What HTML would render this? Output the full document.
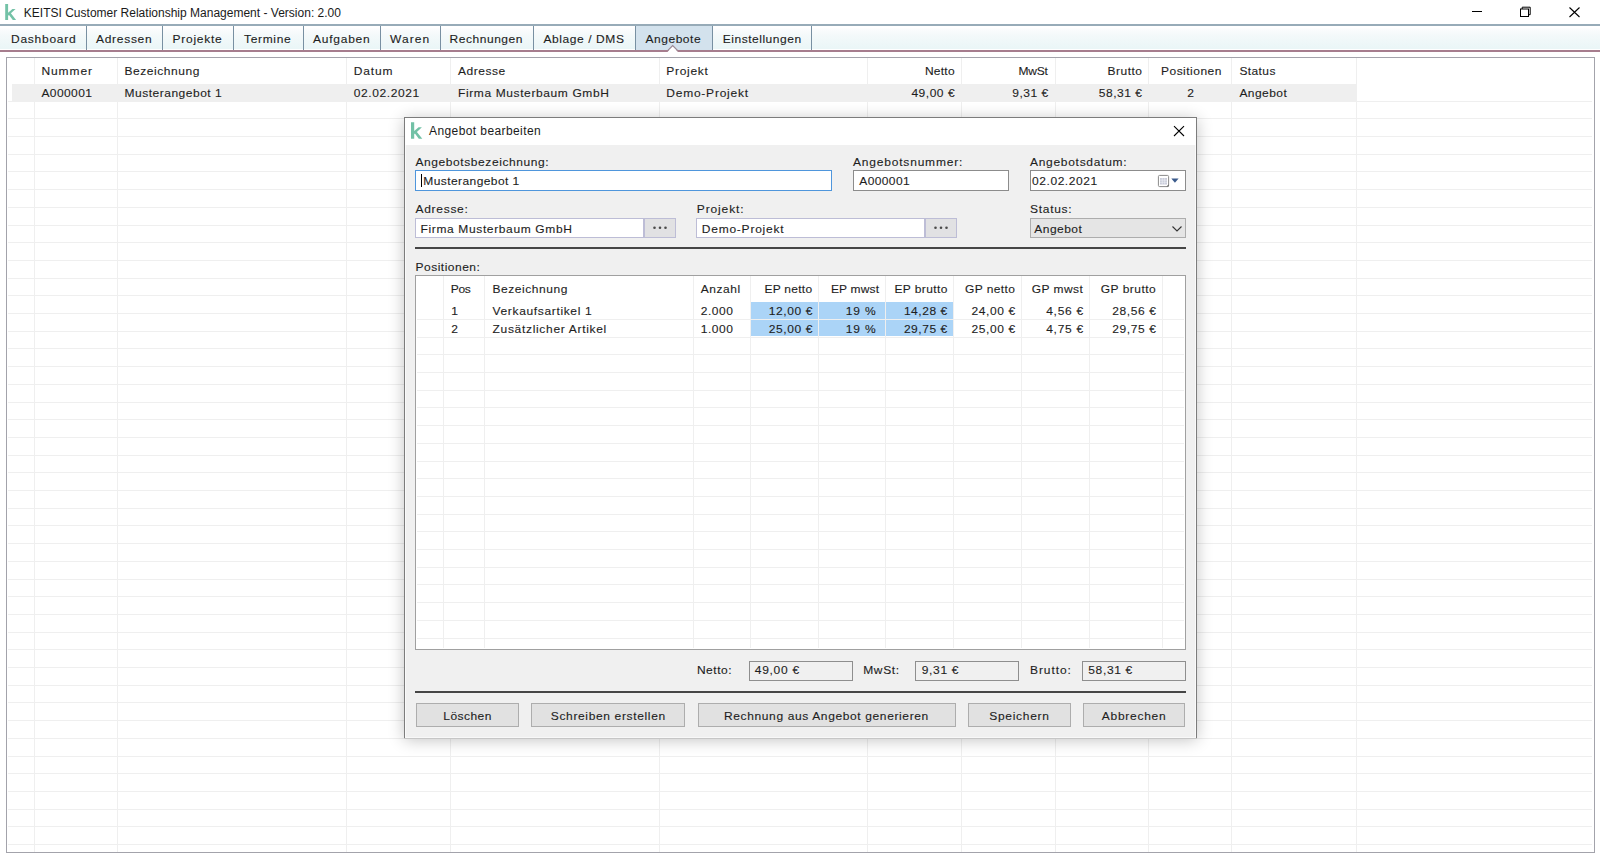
<!DOCTYPE html><html><head><meta charset="utf-8"><style>
html,body{margin:0;padding:0;width:1600px;height:858px;overflow:hidden;background:#fff;}
body{position:relative;font-family:"Liberation Sans",sans-serif;}
.t{position:absolute;white-space:nowrap;line-height:20px;height:20px;-webkit-text-stroke:0.12px currentColor;}
.r{position:absolute;box-sizing:border-box;}
svg{position:absolute;}
</style></head><body>
<svg style="left:0;top:0" width="30" height="24"><path d="M5.2 4.1H8.1V12.7L12.4 8.9H15.6L10.9 13.3L16.1 19.9H12.8L9.0 15.0L8.1 15.8V19.9H5.2Z" fill="#74c2a7"/></svg>
<div class="t" style="left:23.80px;top:2.64px;font-size:12px;color:#1a1a1a;letter-spacing:0.006px;-webkit-text-stroke:0;">KEITSI Customer Relationship Management - Version: 2.00</div>
<div class="r" style="left:1472px;top:11px;width:10px;height:1px;background:#000"></div>
<svg style="left:1515px;top:3px" width="20" height="18"><rect x="5.5" y="6" width="8" height="7.5" fill="none" stroke="#000" stroke-width="1"/><path d="M7.2 6v-1.8h8v7.5h-1.7" fill="none" stroke="#000" stroke-width="1"/></svg>
<svg style="left:1565px;top:3px" width="20" height="18"><path d="M4.5 4.5l10 9.5M14.5 4.5l-10 9.5" stroke="#000" stroke-width="1.1"/></svg>
<div class="r" style="left:0px;top:24px;width:1600px;height:2px;background:#97abb8"></div>
<div class="r" style="left:0px;top:26px;width:1600px;height:24px;background:linear-gradient(#fff 0px,#fff 1.5px,#fbfcfd 3px,#f3f9fa 10px,#eaf6f7 22.5px,#fff 23.5px)"></div>
<div class="r" style="left:635.1px;top:26px;width:77.0px;height:24px;background:#d3e2ed"></div>
<div class="r" style="left:86px;top:26px;width:1px;height:24px;background:#7890a2"></div>
<div class="r" style="left:162px;top:26px;width:1px;height:24px;background:#7890a2"></div>
<div class="r" style="left:233px;top:26px;width:1px;height:24px;background:#7890a2"></div>
<div class="r" style="left:303px;top:26px;width:1px;height:24px;background:#7890a2"></div>
<div class="r" style="left:380px;top:26px;width:1px;height:24px;background:#7890a2"></div>
<div class="r" style="left:440px;top:26px;width:1px;height:24px;background:#7890a2"></div>
<div class="r" style="left:533px;top:26px;width:1px;height:24px;background:#7890a2"></div>
<div class="r" style="left:635px;top:26px;width:1px;height:24px;background:#7890a2"></div>
<div class="r" style="left:712px;top:26px;width:1px;height:24px;background:#7890a2"></div>
<div class="r" style="left:811px;top:26px;width:1px;height:24px;background:#7890a2"></div>
<div class="r" style="left:635px;top:26px;width:1px;height:24px;background:#7890a2"></div>
<div class="t" style="left:11.00px;top:28.84px;font-size:12px;color:#1e1e1e;letter-spacing:0.746px;transform:scaleY(0.91);transform-origin:0 14.16px;">Dashboard</div>
<div class="t" style="left:96.00px;top:28.84px;font-size:12px;color:#1e1e1e;letter-spacing:0.711px;transform:scaleY(0.91);transform-origin:0 14.16px;">Adressen</div>
<div class="t" style="left:172.50px;top:28.84px;font-size:12px;color:#1e1e1e;letter-spacing:0.736px;transform:scaleY(0.91);transform-origin:0 14.16px;">Projekte</div>
<div class="t" style="left:244.00px;top:28.84px;font-size:12px;color:#1e1e1e;letter-spacing:0.666px;transform:scaleY(0.91);transform-origin:0 14.16px;">Termine</div>
<div class="t" style="left:313.00px;top:28.84px;font-size:12px;color:#1e1e1e;letter-spacing:0.756px;transform:scaleY(0.91);transform-origin:0 14.16px;">Aufgaben</div>
<div class="t" style="left:390.00px;top:28.84px;font-size:12px;color:#1e1e1e;letter-spacing:1.044px;transform:scaleY(0.91);transform-origin:0 14.16px;">Waren</div>
<div class="t" style="left:449.60px;top:28.84px;font-size:12px;color:#1e1e1e;letter-spacing:0.535px;transform:scaleY(0.91);transform-origin:0 14.16px;">Rechnungen</div>
<div class="t" style="left:543.40px;top:28.84px;font-size:12px;color:#1e1e1e;letter-spacing:0.588px;transform:scaleY(0.91);transform-origin:0 14.16px;">Ablage / DMS</div>
<div class="t" style="left:645.40px;top:28.84px;font-size:12px;color:#1e1e1e;letter-spacing:0.556px;transform:scaleY(0.91);transform-origin:0 14.16px;">Angebote</div>
<div class="t" style="left:722.80px;top:28.84px;font-size:12px;color:#1e1e1e;letter-spacing:0.518px;transform:scaleY(0.91);transform-origin:0 14.16px;">Einstellungen</div>
<div class="r" style="left:0px;top:49.5px;width:1600px;height:2px;background:#a67d8e"></div>
<svg style="left:660px;top:40px" width="30" height="14"><path d="M7.5 12 L12.7 6.2 L17.9 12z" fill="#fff"/><path d="M7.6 10.6 L12.7 5.6 L17.8 10.6" fill="none" stroke="#9b8893" stroke-width="1.1"/></svg>
<div class="r" style="left:6px;top:57px;width:1589px;height:796px;border:1px solid #a3a3ab;background:#fff"></div>
<div class="r" style="left:34px;top:58px;width:1px;height:794px;background:#efefef"></div>
<div class="r" style="left:117px;top:58px;width:1px;height:794px;background:#efefef"></div>
<div class="r" style="left:346px;top:58px;width:1px;height:794px;background:#efefef"></div>
<div class="r" style="left:450px;top:58px;width:1px;height:794px;background:#efefef"></div>
<div class="r" style="left:659px;top:58px;width:1px;height:794px;background:#efefef"></div>
<div class="r" style="left:867px;top:58px;width:1px;height:794px;background:#efefef"></div>
<div class="r" style="left:961px;top:58px;width:1px;height:794px;background:#efefef"></div>
<div class="r" style="left:1055px;top:58px;width:1px;height:794px;background:#efefef"></div>
<div class="r" style="left:1148px;top:58px;width:1px;height:794px;background:#efefef"></div>
<div class="r" style="left:1231px;top:58px;width:1px;height:794px;background:#efefef"></div>
<div class="r" style="left:1356px;top:58px;width:1px;height:794px;background:#efefef"></div>
<div class="r" style="left:8px;top:101px;width:1584px;height:1px;background:#efefef"></div>
<div class="r" style="left:8px;top:118px;width:1584px;height:1px;background:#efefef"></div>
<div class="r" style="left:8px;top:136px;width:1584px;height:1px;background:#efefef"></div>
<div class="r" style="left:8px;top:154px;width:1584px;height:1px;background:#efefef"></div>
<div class="r" style="left:8px;top:171px;width:1584px;height:1px;background:#efefef"></div>
<div class="r" style="left:8px;top:189px;width:1584px;height:1px;background:#efefef"></div>
<div class="r" style="left:8px;top:207px;width:1584px;height:1px;background:#efefef"></div>
<div class="r" style="left:8px;top:225px;width:1584px;height:1px;background:#efefef"></div>
<div class="r" style="left:8px;top:242px;width:1584px;height:1px;background:#efefef"></div>
<div class="r" style="left:8px;top:260px;width:1584px;height:1px;background:#efefef"></div>
<div class="r" style="left:8px;top:278px;width:1584px;height:1px;background:#efefef"></div>
<div class="r" style="left:8px;top:295px;width:1584px;height:1px;background:#efefef"></div>
<div class="r" style="left:8px;top:313px;width:1584px;height:1px;background:#efefef"></div>
<div class="r" style="left:8px;top:331px;width:1584px;height:1px;background:#efefef"></div>
<div class="r" style="left:8px;top:348px;width:1584px;height:1px;background:#efefef"></div>
<div class="r" style="left:8px;top:366px;width:1584px;height:1px;background:#efefef"></div>
<div class="r" style="left:8px;top:384px;width:1584px;height:1px;background:#efefef"></div>
<div class="r" style="left:8px;top:402px;width:1584px;height:1px;background:#efefef"></div>
<div class="r" style="left:8px;top:419px;width:1584px;height:1px;background:#efefef"></div>
<div class="r" style="left:8px;top:437px;width:1584px;height:1px;background:#efefef"></div>
<div class="r" style="left:8px;top:455px;width:1584px;height:1px;background:#efefef"></div>
<div class="r" style="left:8px;top:472px;width:1584px;height:1px;background:#efefef"></div>
<div class="r" style="left:8px;top:490px;width:1584px;height:1px;background:#efefef"></div>
<div class="r" style="left:8px;top:508px;width:1584px;height:1px;background:#efefef"></div>
<div class="r" style="left:8px;top:525px;width:1584px;height:1px;background:#efefef"></div>
<div class="r" style="left:8px;top:543px;width:1584px;height:1px;background:#efefef"></div>
<div class="r" style="left:8px;top:561px;width:1584px;height:1px;background:#efefef"></div>
<div class="r" style="left:8px;top:579px;width:1584px;height:1px;background:#efefef"></div>
<div class="r" style="left:8px;top:596px;width:1584px;height:1px;background:#efefef"></div>
<div class="r" style="left:8px;top:614px;width:1584px;height:1px;background:#efefef"></div>
<div class="r" style="left:8px;top:632px;width:1584px;height:1px;background:#efefef"></div>
<div class="r" style="left:8px;top:649px;width:1584px;height:1px;background:#efefef"></div>
<div class="r" style="left:8px;top:667px;width:1584px;height:1px;background:#efefef"></div>
<div class="r" style="left:8px;top:685px;width:1584px;height:1px;background:#efefef"></div>
<div class="r" style="left:8px;top:702px;width:1584px;height:1px;background:#efefef"></div>
<div class="r" style="left:8px;top:720px;width:1584px;height:1px;background:#efefef"></div>
<div class="r" style="left:8px;top:738px;width:1584px;height:1px;background:#efefef"></div>
<div class="r" style="left:8px;top:756px;width:1584px;height:1px;background:#efefef"></div>
<div class="r" style="left:8px;top:773px;width:1584px;height:1px;background:#efefef"></div>
<div class="r" style="left:8px;top:791px;width:1584px;height:1px;background:#efefef"></div>
<div class="r" style="left:8px;top:809px;width:1584px;height:1px;background:#efefef"></div>
<div class="r" style="left:8px;top:826px;width:1584px;height:1px;background:#efefef"></div>
<div class="r" style="left:8px;top:844px;width:1584px;height:1px;background:#efefef"></div>
<div class="r" style="left:12px;top:84px;width:1345px;height:17px;background:#efefef"></div>
<div class="t" style="left:41.40px;top:61.14px;font-size:12px;color:#1e1e1e;letter-spacing:0.919px;transform:scaleY(0.91);transform-origin:0 14.16px;">Nummer</div>
<div class="t" style="left:124.50px;top:61.14px;font-size:12px;color:#1e1e1e;letter-spacing:0.554px;transform:scaleY(0.91);transform-origin:0 14.16px;">Bezeichnung</div>
<div class="t" style="left:353.75px;top:61.14px;font-size:12px;color:#1e1e1e;letter-spacing:0.851px;transform:scaleY(0.91);transform-origin:0 14.16px;">Datum</div>
<div class="t" style="left:458.00px;top:61.14px;font-size:12px;color:#1e1e1e;letter-spacing:0.525px;transform:scaleY(0.91);transform-origin:0 14.16px;">Adresse</div>
<div class="t" style="left:666.30px;top:61.14px;font-size:12px;color:#1e1e1e;letter-spacing:0.698px;transform:scaleY(0.91);transform-origin:0 14.16px;">Projekt</div>
<div class="t" style="left:924.90px;top:61.14px;font-size:12px;color:#1e1e1e;letter-spacing:0.248px;transform:scaleY(0.91);transform-origin:0 14.16px;">Netto</div>
<div class="t" style="left:1018.60px;top:61.14px;font-size:12px;color:#1e1e1e;letter-spacing:-0.222px;transform:scaleY(0.91);transform-origin:0 14.16px;">MwSt</div>
<div class="t" style="left:1107.50px;top:61.14px;font-size:12px;color:#1e1e1e;letter-spacing:0.492px;transform:scaleY(0.91);transform-origin:0 14.16px;">Brutto</div>
<div class="t" style="left:1161.00px;top:61.14px;font-size:12px;color:#1e1e1e;letter-spacing:0.482px;transform:scaleY(0.91);transform-origin:0 14.16px;">Positionen</div>
<div class="t" style="left:1239.40px;top:61.14px;font-size:12px;color:#1e1e1e;letter-spacing:0.396px;transform:scaleY(0.91);transform-origin:0 14.16px;">Status</div>
<div class="t" style="left:41.40px;top:83.04px;font-size:12px;color:#1e1e1e;letter-spacing:0.421px;transform:scaleY(0.91);transform-origin:0 14.16px;">A000001</div>
<div class="t" style="left:124.50px;top:83.04px;font-size:12px;color:#1e1e1e;letter-spacing:0.508px;transform:scaleY(0.91);transform-origin:0 14.16px;">Musterangebot 1</div>
<div class="t" style="left:353.75px;top:83.04px;font-size:12px;color:#1e1e1e;letter-spacing:0.596px;transform:scaleY(0.91);transform-origin:0 14.16px;">02.02.2021</div>
<div class="t" style="left:458.00px;top:83.04px;font-size:12px;color:#1e1e1e;letter-spacing:0.611px;transform:scaleY(0.91);transform-origin:0 14.16px;">Firma Musterbaum GmbH</div>
<div class="t" style="left:666.30px;top:83.04px;font-size:12px;color:#1e1e1e;letter-spacing:0.762px;transform:scaleY(0.91);transform-origin:0 14.16px;">Demo-Projekt</div>
<div class="t" style="left:911.40px;top:83.04px;font-size:12px;color:#1e1e1e;letter-spacing:0.523px;transform:scaleY(0.91);transform-origin:0 14.16px;">49,00 €</div>
<div class="t" style="left:1012.20px;top:83.04px;font-size:12px;color:#1e1e1e;letter-spacing:0.542px;transform:scaleY(0.91);transform-origin:0 14.16px;">9,31 €</div>
<div class="t" style="left:1098.80px;top:83.04px;font-size:12px;color:#1e1e1e;letter-spacing:0.523px;transform:scaleY(0.91);transform-origin:0 14.16px;">58,31 €</div>
<div class="t" style="left:1187.30px;top:83.04px;font-size:12px;color:#1e1e1e;letter-spacing:0.000px;transform:scaleY(0.91);transform-origin:0 14.16px;">2</div>
<div class="t" style="left:1239.40px;top:83.04px;font-size:12px;color:#1e1e1e;letter-spacing:0.438px;transform:scaleY(0.91);transform-origin:0 14.16px;">Angebot</div>
<div class="r" style="left:404px;top:117px;width:793px;height:621px;box-shadow:0 1px 0 #c6c6c6, 0 2px 15px rgba(0,0,0,0.24);background:#f0f0f0;border:1px solid #7c7c7c;border-bottom:none"></div>
<div class="r" style="left:405px;top:118px;width:791px;height:26.5px;background:#fff"></div>
<div class="r" style="left:405px;top:144.5px;width:1px;height:593.5px;background:#fafafa"></div>
<div class="r" style="left:1195px;top:144.5px;width:1px;height:593.5px;background:#fafafa"></div>
<div class="r" style="left:405px;top:737px;width:791px;height:1px;background:#f8f8f8"></div>
<svg style="left:405px;top:118px" width="24" height="24"><path d="M6.0 4.2H9.2V13.1L13.6 9.2H16.9L11.9 13.9L17.3 20.7H13.8L9.9 15.6L9.2 16.2V20.7H6.0Z" fill="#72c1a6"/></svg>
<div class="t" style="left:429.00px;top:121.14px;font-size:12px;color:#1a1a1a;letter-spacing:0.407px;-webkit-text-stroke:0;">Angebot bearbeiten</div>
<svg style="left:1170px;top:122px" width="18" height="18"><path d="M4 4.2l10 9.8M14 4.2l-10 9.8" stroke="#000" stroke-width="1.1"/></svg>
<div class="t" style="left:415.50px;top:152.04px;font-size:12px;color:#1e1e1e;letter-spacing:0.578px;transform:scaleY(0.91);transform-origin:0 14.16px;">Angebotsbezeichnung:</div>
<div class="t" style="left:853.00px;top:152.04px;font-size:12px;color:#1e1e1e;letter-spacing:0.806px;transform:scaleY(0.91);transform-origin:0 14.16px;">Angebotsnummer:</div>
<div class="t" style="left:1030.00px;top:152.04px;font-size:12px;color:#1e1e1e;letter-spacing:0.707px;transform:scaleY(0.91);transform-origin:0 14.16px;">Angebotsdatum:</div>
<div class="r" style="left:415px;top:170.3px;width:416.5px;height:20.8px;border:1px solid #4f96dc;background:#fff"></div>
<div class="r" style="left:852.5px;top:170.3px;width:156.5px;height:20.8px;border:1px solid #8c8c8c;background:#fff"></div>
<div class="r" style="left:1029.5px;top:170.3px;width:156.5px;height:20.8px;border:1px solid #8c8c8c;background:#fff"></div>
<div class="t" style="left:423.30px;top:171.14px;font-size:12px;color:#1e1e1e;letter-spacing:0.415px;transform:scaleY(0.91);transform-origin:0 14.16px;">Musterangebot 1</div>
<div class="r" style="left:421px;top:174px;width:1.2px;height:13px;background:#000"></div>
<div class="t" style="left:859.25px;top:171.14px;font-size:12px;color:#1e1e1e;letter-spacing:0.396px;transform:scaleY(0.91);transform-origin:0 14.16px;">A000001</div>
<div class="t" style="left:1032.00px;top:171.14px;font-size:12px;color:#1e1e1e;letter-spacing:0.568px;transform:scaleY(0.91);transform-origin:0 14.16px;">02.02.2021</div>
<svg style="left:1155px;top:173px" width="28" height="17"><rect x="3.4" y="2.4" width="10.2" height="11.2" rx="1.2" fill="#fff" stroke="#8a8a8a" stroke-width="1"/><rect x="5" y="5" width="7" height="6.5" fill="#c9ccda"/><path d="M5 7.2h7M5 9.3h7M7.3 5v6.5M9.7 5v6.5" stroke="#eef0f6" stroke-width="0.6"/><path d="M11.5 13.6l2.1-2.1v2.1z" fill="#555"/><path d="M16.3 5.6h7.3l-3.65 4.2z" fill="#3b5b8c"/></svg>
<div class="t" style="left:415.50px;top:198.94px;font-size:12px;color:#1e1e1e;letter-spacing:0.711px;transform:scaleY(0.91);transform-origin:0 14.16px;">Adresse:</div>
<div class="t" style="left:696.75px;top:198.94px;font-size:12px;color:#1e1e1e;letter-spacing:0.879px;transform:scaleY(0.91);transform-origin:0 14.16px;">Projekt:</div>
<div class="t" style="left:1030.00px;top:198.94px;font-size:12px;color:#1e1e1e;letter-spacing:0.705px;transform:scaleY(0.91);transform-origin:0 14.16px;">Status:</div>
<div class="r" style="left:415px;top:217.6px;width:229px;height:20.2px;border:1px solid #bdbdd6;background:#fff"></div>
<div class="r" style="left:643.5px;top:217.6px;width:32px;height:20.2px;border:1px solid #bdbdd6;background:#e1e1e3"></div>
<div class="r" style="left:696px;top:217.6px;width:229px;height:20.2px;border:1px solid #bdbdd6;background:#fff"></div>
<div class="r" style="left:924.5px;top:217.6px;width:32.5px;height:20.2px;border:1px solid #bdbdd6;background:#e1e1e3"></div>
<div class="r" style="left:1029.5px;top:217.6px;width:156.5px;height:20.2px;border:1px solid #adadad;background:#e5e5e5"></div>
<div class="t" style="left:420.50px;top:218.84px;font-size:12px;color:#1e1e1e;letter-spacing:0.636px;transform:scaleY(0.91);transform-origin:0 14.16px;">Firma Musterbaum GmbH</div>
<div class="t" style="left:701.75px;top:218.84px;font-size:12px;color:#1e1e1e;letter-spacing:0.771px;transform:scaleY(0.91);transform-origin:0 14.16px;">Demo-Projekt</div>
<div class="t" style="left:1034.25px;top:218.84px;font-size:12px;color:#1e1e1e;letter-spacing:0.479px;transform:scaleY(0.91);transform-origin:0 14.16px;">Angebot</div>
<svg style="left:651.5px;top:222px" width="16" height="10"><circle cx="2.5" cy="5.7" r="1.3" fill="#4a4a4a"/><circle cx="8" cy="5.7" r="1.3" fill="#4a4a4a"/><circle cx="13.5" cy="5.7" r="1.3" fill="#4a4a4a"/></svg>
<svg style="left:932.5px;top:222px" width="16" height="10"><circle cx="2.5" cy="5.7" r="1.3" fill="#4a4a4a"/><circle cx="8" cy="5.7" r="1.3" fill="#4a4a4a"/><circle cx="13.5" cy="5.7" r="1.3" fill="#4a4a4a"/></svg>
<svg style="left:1168px;top:222px" width="16" height="12"><path d="M4.5 4.5l4.5 4.5 4.5-4.5" fill="none" stroke="#333" stroke-width="1.1"/></svg>
<div class="r" style="left:415px;top:247.3px;width:771px;height:2.2px;background:#464646"></div>
<div class="t" style="left:415.50px;top:257.09px;font-size:12px;color:#1e1e1e;letter-spacing:0.496px;transform:scaleY(0.91);transform-origin:0 14.16px;">Positionen:</div>
<div class="r" style="left:415px;top:275px;width:771px;height:374.5px;border:1px solid #a0a0a0;background:#fff"></div>
<div class="r" style="left:443px;top:276px;width:1px;height:372px;background:#efefef"></div>
<div class="r" style="left:484px;top:276px;width:1px;height:372px;background:#efefef"></div>
<div class="r" style="left:693px;top:276px;width:1px;height:372px;background:#efefef"></div>
<div class="r" style="left:750px;top:276px;width:1px;height:372px;background:#efefef"></div>
<div class="r" style="left:818px;top:276px;width:1px;height:372px;background:#efefef"></div>
<div class="r" style="left:885px;top:276px;width:1px;height:372px;background:#efefef"></div>
<div class="r" style="left:953px;top:276px;width:1px;height:372px;background:#efefef"></div>
<div class="r" style="left:1021px;top:276px;width:1px;height:372px;background:#efefef"></div>
<div class="r" style="left:1089px;top:276px;width:1px;height:372px;background:#efefef"></div>
<div class="r" style="left:1162px;top:276px;width:1px;height:372px;background:#efefef"></div>
<div class="r" style="left:417px;top:319px;width:767px;height:1px;background:#efefef"></div>
<div class="r" style="left:417px;top:337px;width:767px;height:1px;background:#efefef"></div>
<div class="r" style="left:417px;top:354px;width:767px;height:1px;background:#efefef"></div>
<div class="r" style="left:417px;top:372px;width:767px;height:1px;background:#efefef"></div>
<div class="r" style="left:417px;top:390px;width:767px;height:1px;background:#efefef"></div>
<div class="r" style="left:417px;top:407px;width:767px;height:1px;background:#efefef"></div>
<div class="r" style="left:417px;top:425px;width:767px;height:1px;background:#efefef"></div>
<div class="r" style="left:417px;top:443px;width:767px;height:1px;background:#efefef"></div>
<div class="r" style="left:417px;top:461px;width:767px;height:1px;background:#efefef"></div>
<div class="r" style="left:417px;top:478px;width:767px;height:1px;background:#efefef"></div>
<div class="r" style="left:417px;top:496px;width:767px;height:1px;background:#efefef"></div>
<div class="r" style="left:417px;top:514px;width:767px;height:1px;background:#efefef"></div>
<div class="r" style="left:417px;top:531px;width:767px;height:1px;background:#efefef"></div>
<div class="r" style="left:417px;top:549px;width:767px;height:1px;background:#efefef"></div>
<div class="r" style="left:417px;top:567px;width:767px;height:1px;background:#efefef"></div>
<div class="r" style="left:417px;top:584px;width:767px;height:1px;background:#efefef"></div>
<div class="r" style="left:417px;top:602px;width:767px;height:1px;background:#efefef"></div>
<div class="r" style="left:417px;top:620px;width:767px;height:1px;background:#efefef"></div>
<div class="r" style="left:417px;top:638px;width:767px;height:1px;background:#efefef"></div>
<div class="r" style="left:751px;top:302px;width:67px;height:17px;background:#abd4f7"></div>
<div class="r" style="left:751px;top:320px;width:67px;height:16px;background:#abd4f7"></div>
<div class="r" style="left:819px;top:302px;width:66px;height:17px;background:#abd4f7"></div>
<div class="r" style="left:819px;top:320px;width:66px;height:16px;background:#abd4f7"></div>
<div class="r" style="left:886px;top:302px;width:67px;height:17px;background:#abd4f7"></div>
<div class="r" style="left:886px;top:320px;width:67px;height:16px;background:#abd4f7"></div>
<div class="t" style="left:450.75px;top:279.34px;font-size:12px;color:#1e1e1e;letter-spacing:-0.339px;transform:scaleY(0.91);transform-origin:0 14.16px;">Pos</div>
<div class="t" style="left:492.50px;top:279.34px;font-size:12px;color:#1e1e1e;letter-spacing:0.554px;transform:scaleY(0.91);transform-origin:0 14.16px;">Bezeichnung</div>
<div class="t" style="left:700.75px;top:279.34px;font-size:12px;color:#1e1e1e;letter-spacing:0.545px;transform:scaleY(0.91);transform-origin:0 14.16px;">Anzahl</div>
<div class="t" style="left:764.40px;top:279.34px;font-size:12px;color:#1e1e1e;letter-spacing:0.278px;transform:scaleY(0.91);transform-origin:0 14.16px;">EP netto</div>
<div class="t" style="left:830.90px;top:279.34px;font-size:12px;color:#1e1e1e;letter-spacing:0.183px;transform:scaleY(0.91);transform-origin:0 14.16px;">EP mwst</div>
<div class="t" style="left:894.40px;top:279.34px;font-size:12px;color:#1e1e1e;letter-spacing:0.393px;transform:scaleY(0.91);transform-origin:0 14.16px;">EP brutto</div>
<div class="t" style="left:965.10px;top:279.34px;font-size:12px;color:#1e1e1e;letter-spacing:0.373px;transform:scaleY(0.91);transform-origin:0 14.16px;">GP netto</div>
<div class="t" style="left:1031.80px;top:279.34px;font-size:12px;color:#1e1e1e;letter-spacing:0.411px;transform:scaleY(0.91);transform-origin:0 14.16px;">GP mwst</div>
<div class="t" style="left:1100.80px;top:279.34px;font-size:12px;color:#1e1e1e;letter-spacing:0.477px;transform:scaleY(0.91);transform-origin:0 14.16px;">GP brutto</div>
<div class="t" style="left:451.25px;top:301.14px;font-size:12px;color:#1e1e1e;letter-spacing:0.000px;transform:scaleY(0.91);transform-origin:0 14.16px;">1</div>
<div class="t" style="left:451.25px;top:319.04px;font-size:12px;color:#1e1e1e;letter-spacing:0.000px;transform:scaleY(0.91);transform-origin:0 14.16px;">2</div>
<div class="t" style="left:492.50px;top:301.14px;font-size:12px;color:#1e1e1e;letter-spacing:0.654px;transform:scaleY(0.91);transform-origin:0 14.16px;">Verkaufsartikel 1</div>
<div class="t" style="left:492.50px;top:319.04px;font-size:12px;color:#1e1e1e;letter-spacing:0.687px;transform:scaleY(0.91);transform-origin:0 14.16px;">Zusätzlicher Artikel</div>
<div class="t" style="left:700.75px;top:301.14px;font-size:12px;color:#1e1e1e;letter-spacing:0.536px;transform:scaleY(0.91);transform-origin:0 14.16px;">2.000</div>
<div class="t" style="left:700.75px;top:319.04px;font-size:12px;color:#1e1e1e;letter-spacing:0.536px;transform:scaleY(0.91);transform-origin:0 14.16px;">1.000</div>
<div class="t" style="left:768.75px;top:301.14px;font-size:12px;color:#1e1e1e;letter-spacing:0.598px;transform:scaleY(0.91);transform-origin:0 14.16px;">12,00 €</div>
<div class="t" style="left:768.75px;top:319.04px;font-size:12px;color:#1e1e1e;letter-spacing:0.598px;transform:scaleY(0.91);transform-origin:0 14.16px;">25,00 €</div>
<div class="t" style="left:845.80px;top:301.14px;font-size:12px;color:#1e1e1e;letter-spacing:0.839px;transform:scaleY(0.91);transform-origin:0 14.16px;">19 %</div>
<div class="t" style="left:845.80px;top:319.04px;font-size:12px;color:#1e1e1e;letter-spacing:0.839px;transform:scaleY(0.91);transform-origin:0 14.16px;">19 %</div>
<div class="t" style="left:903.90px;top:301.14px;font-size:12px;color:#1e1e1e;letter-spacing:0.556px;transform:scaleY(0.91);transform-origin:0 14.16px;">14,28 €</div>
<div class="t" style="left:903.90px;top:319.04px;font-size:12px;color:#1e1e1e;letter-spacing:0.556px;transform:scaleY(0.91);transform-origin:0 14.16px;">29,75 €</div>
<div class="t" style="left:971.50px;top:301.14px;font-size:12px;color:#1e1e1e;letter-spacing:0.589px;transform:scaleY(0.91);transform-origin:0 14.16px;">24,00 €</div>
<div class="t" style="left:971.50px;top:319.04px;font-size:12px;color:#1e1e1e;letter-spacing:0.589px;transform:scaleY(0.91);transform-origin:0 14.16px;">25,00 €</div>
<div class="t" style="left:1046.20px;top:301.14px;font-size:12px;color:#1e1e1e;letter-spacing:0.742px;transform:scaleY(0.91);transform-origin:0 14.16px;">4,56 €</div>
<div class="t" style="left:1046.20px;top:319.04px;font-size:12px;color:#1e1e1e;letter-spacing:0.742px;transform:scaleY(0.91);transform-origin:0 14.16px;">4,75 €</div>
<div class="t" style="left:1112.30px;top:301.14px;font-size:12px;color:#1e1e1e;letter-spacing:0.606px;transform:scaleY(0.91);transform-origin:0 14.16px;">28,56 €</div>
<div class="t" style="left:1112.30px;top:319.04px;font-size:12px;color:#1e1e1e;letter-spacing:0.606px;transform:scaleY(0.91);transform-origin:0 14.16px;">29,75 €</div>
<div class="t" style="left:696.90px;top:660.34px;font-size:12px;color:#1e1e1e;letter-spacing:0.534px;transform:scaleY(0.91);transform-origin:0 14.16px;">Netto:</div>
<div class="t" style="left:863.25px;top:660.34px;font-size:12px;color:#1e1e1e;letter-spacing:0.625px;transform:scaleY(0.91);transform-origin:0 14.16px;">MwSt:</div>
<div class="t" style="left:1030.00px;top:660.34px;font-size:12px;color:#1e1e1e;letter-spacing:0.914px;transform:scaleY(0.91);transform-origin:0 14.16px;">Brutto:</div>
<div class="r" style="left:748.5px;top:660.5px;width:104.0px;height:20px;border:1px solid #8e8e8e;background:#f0f0f0"></div>
<div class="r" style="left:915px;top:660.5px;width:104px;height:20px;border:1px solid #8e8e8e;background:#f0f0f0"></div>
<div class="r" style="left:1081.5px;top:660.5px;width:104.5px;height:20px;border:1px solid #8e8e8e;background:#f0f0f0"></div>
<div class="t" style="left:754.75px;top:660.34px;font-size:12px;color:#1e1e1e;letter-spacing:0.714px;transform:scaleY(0.91);transform-origin:0 14.16px;">49,00 €</div>
<div class="t" style="left:921.75px;top:660.34px;font-size:12px;color:#1e1e1e;letter-spacing:0.662px;transform:scaleY(0.91);transform-origin:0 14.16px;">9,31 €</div>
<div class="t" style="left:1088.25px;top:660.34px;font-size:12px;color:#1e1e1e;letter-spacing:0.648px;transform:scaleY(0.91);transform-origin:0 14.16px;">58,31 €</div>
<div class="r" style="left:415px;top:690.6px;width:771px;height:2.2px;background:#464646"></div>
<div class="r" style="left:415.5px;top:703px;width:103.0px;height:23.5px;border:1px solid #adadad;background:#e1e1e1"></div>
<div class="t" style="left:443.25px;top:705.64px;font-size:12px;color:#1e1e1e;letter-spacing:0.467px;transform:scaleY(0.91);transform-origin:0 14.16px;">Löschen</div>
<div class="r" style="left:530.5px;top:703px;width:154.5px;height:23.5px;border:1px solid #adadad;background:#e1e1e1"></div>
<div class="t" style="left:550.75px;top:705.64px;font-size:12px;color:#1e1e1e;letter-spacing:0.650px;transform:scaleY(0.91);transform-origin:0 14.16px;">Schreiben erstellen</div>
<div class="r" style="left:697.5px;top:703px;width:258.5px;height:23.5px;border:1px solid #adadad;background:#e1e1e1"></div>
<div class="t" style="left:724.00px;top:705.64px;font-size:12px;color:#1e1e1e;letter-spacing:0.626px;transform:scaleY(0.91);transform-origin:0 14.16px;">Rechnung aus Angebot generieren</div>
<div class="r" style="left:968px;top:703px;width:102.5px;height:23.5px;border:1px solid #adadad;background:#e1e1e1"></div>
<div class="t" style="left:989.25px;top:705.64px;font-size:12px;color:#1e1e1e;letter-spacing:0.705px;transform:scaleY(0.91);transform-origin:0 14.16px;">Speichern</div>
<div class="r" style="left:1083px;top:703px;width:102px;height:23.5px;border:1px solid #adadad;background:#e1e1e1"></div>
<div class="t" style="left:1101.75px;top:705.64px;font-size:12px;color:#1e1e1e;letter-spacing:0.735px;transform:scaleY(0.91);transform-origin:0 14.16px;">Abbrechen</div>
</body></html>
